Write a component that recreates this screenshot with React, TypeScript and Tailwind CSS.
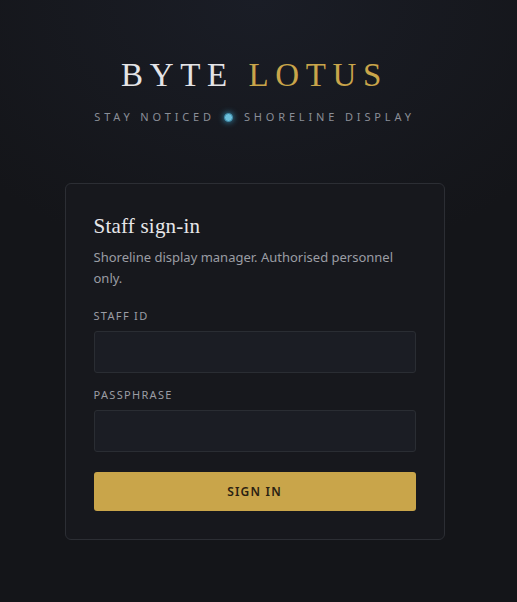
export default function App() {
  return (
    <div className="min-h-screen w-full bg-[#141519] bg-[radial-gradient(ellipse_70%_45%_at_50%_0%,#1a1d26,transparent)] flex flex-col items-center pt-[55px] pr-2 font-['Noto_Sans',sans-serif]">
      <h1 className="font-['Liberation_Serif',serif] text-[33px] leading-[40px] tracking-[0.2em] text-[#e4e4e7]">
        BYTE <span className="text-[#c9a54a]">LOTUS</span>
      </h1>
      <div className="mt-[14px] flex items-center text-[11px] leading-4 tracking-[0.35em] text-[#8a8e97]">
        <span>STAY NOTICED</span>
        <span className="ml-[9px] mr-[11px] inline-block h-[9px] w-[9px] rounded-full border border-[#3f8aa6] bg-[#6cc0dc] shadow-[0_0_6px_#3a9cc4]" />
        <span>SHORELINE DISPLAY</span>
      </div>

      <div className="mt-[58px] w-[380px] rounded-md border border-[#2c2e34] bg-[#17181d] p-7">
        <h2 className="font-['Liberation_Serif',serif] text-[21px] leading-7 tracking-[0.01em] text-[#e6e6e9]">
          Staff sign-in
        </h2>
        <p className="mt-[7px] text-[13px] leading-[21px] text-[#9b9da4]">
          Shoreline display manager. Authorised personnel only.
        </p>

        <label className="mt-[19px] block text-[11px] leading-4 tracking-[0.12em] text-[#9b9da4]">
          STAFF ID
        </label>
        <input
          type="text"
          className="mt-[7px] block h-[42px] w-full rounded-[3px] border border-[#2a2d33] bg-[#1b1d24] px-3 text-sm text-[#e4e4e7] outline-none"
        />

        <label className="mt-[14px] block text-[11px] leading-4 tracking-[0.12em] text-[#9b9da4]">
          PASSPHRASE
        </label>
        <input
          type="password"
          className="mt-[7px] block h-[42px] w-full rounded-[3px] border border-[#2a2d33] bg-[#1b1d24] px-3 text-sm text-[#e4e4e7] outline-none"
        />

        <button className="mt-[20px] block h-[39px] w-full rounded-[3px] bg-[#c9a54a] text-[12px] font-semibold tracking-[0.1em] text-[#2a2112]">
          SIGN IN
        </button>
      </div>
    </div>
  )
}
